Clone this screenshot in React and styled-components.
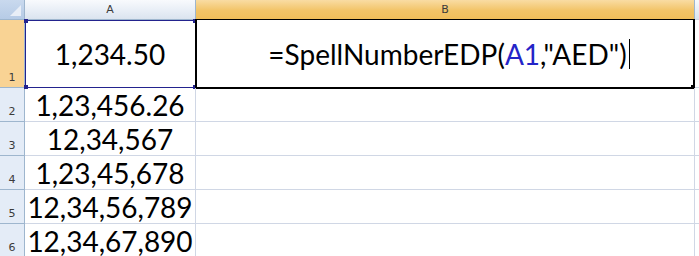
import React from 'react'
import styled, { createGlobalStyle, css } from 'styled-components';

const Global = createGlobalStyle`
  html, body { margin: 0; padding: 0; background: #fff; }
  body { width: 699px; height: 256px; overflow: hidden; }
`;

const Sheet = styled.div`
  display: grid;
  grid-template-columns: 25px 171px 499px 4px;
  grid-template-rows: 20px 68px repeat(5, 34px);
  font-family: Lato, "Open Sans", sans-serif;
`;

const Corner = styled.div`
  position: relative;
  background: linear-gradient(#c9d9ee, #b6cbe6);
  border-right: 1px solid #9eb6ce;
  border-bottom: 1px solid #9eb6ce;
  &::after {
    content: '';
    position: absolute;
    right: 3px;
    bottom: 3px;
    border-left: 11px solid transparent;
    border-bottom: 11px solid #e8eef7;
  }
`;

const ColHead = styled.div`
  display: flex;
  align-items: center;
  justify-content: center;
  font-family: "DejaVu Sans", sans-serif;
  font-size: 11px;
  color: #3b3b3b;
  border-right: 1px solid #9eb6ce;
  border-bottom: 1px solid #9eb6ce;
  background: ${({ active }) => active
    ? 'linear-gradient(#f9dca3, #f2c468 55%, #f0be5a)'
    : 'linear-gradient(#f8fafd, #e8eef6 55%, #dbe4ef)'};
`;

const RowHead = styled.div`
  display: flex;
  align-items: flex-end;
  justify-content: center;
  padding-bottom: 3px;
  box-sizing: border-box;
  font-family: "DejaVu Sans", sans-serif;
  font-size: 11px;
  color: #3b3b3b;
  border-right: 1px solid #9eb6ce;
  border-bottom: 1px solid #9eb6ce;
  background: ${({ active }) => active ? '#f9d394' : '#e4ecf7'};
`;

const Cell = styled.div`
  position: relative;
  display: flex;
  justify-content: center;
  align-items: ${({ middle }) => middle ? 'center' : 'flex-end'};
  box-sizing: border-box;
  padding-bottom: ${({ middle }) => middle ? '0' : '2px'};
  font-size: 28px;
  line-height: 1;
  color: #000;
  white-space: nowrap;
  border-right: 1px solid #d0d7e5;
  border-bottom: 1px solid #d0d7e5;
`;

const RefBox = styled.div`
  position: absolute;
  left: 0;
  top: 0;
  right: -1px;
  bottom: -1px;
  border: 1px solid #23238e;
  pointer-events: none;
`;

const Handle = styled.span`
  position: absolute;
  width: 4px;
  height: 4px;
  background: ${({ color }) => color || '#23238e'};
  ${({ pos }) => pos === 'tl' && css`left: -2px; top: -2px;`}
  ${({ pos }) => pos === 'tr' && css`right: -2px; top: -2px;`}
  ${({ pos }) => pos === 'bl' && css`left: -2px; bottom: -2px;`}
  ${({ pos }) => pos === 'br' && css`right: -2px; bottom: -2px;`}
`;

const ActiveBox = styled.div`
  position: absolute;
  left: -1px;
  top: -1px;
  right: -1px;
  bottom: -2px;
  border: 2px solid #000;
  border-top-width: 1px;
  pointer-events: none;
`;

const Ref = styled.span`
  color: #2424c8;
`;

const Caret = styled.span`
  display: inline-block;
  width: 1px;
  height: 30px;
  margin-left: 2px;
  background: #000;
  vertical-align: middle;
`;

const Formula = styled.span`
  display: inline-flex;
  align-items: center;
  margin-left: 8px;
`;

const Edge = styled.div`
  border-bottom: 1px solid #d0d7e5;
  background: ${({ head }) => head ? 'linear-gradient(#f8fafd, #dbe4ef)' : '#fff'};
`;

const rows = ['1,23,456.26', '12,34,567', '1,23,45,678', '12,34,56,789', '12,34,67,890'];

export default function App() {
  return (
    <>
      <Global />
      <Sheet>
        <Corner />
        <ColHead>A</ColHead>
        <ColHead active>B</ColHead>
        <Edge head />

        <RowHead active>1</RowHead>
        <Cell middle>
          1,234.50
          <RefBox>
            <Handle pos="tl" />
            <Handle pos="tr" />
            <Handle pos="bl" />
            <Handle pos="br" />
          </RefBox>
        </Cell>
        <Cell middle>
          <Formula>
            =SpellNumberEDP(<Ref>A1</Ref>,"AED")<Caret />
          </Formula>
          <ActiveBox>
            <Handle pos="br" color="#000" />
          </ActiveBox>
        </Cell>
        <Edge />

        {rows.map((v, i) => (
          <React.Fragment key={v}>
            <RowHead>{i + 2}</RowHead>
            <Cell>{v}</Cell>
            <Cell />
            <Edge />
          </React.Fragment>
        ))}
      </Sheet>
    </>
  );
}
